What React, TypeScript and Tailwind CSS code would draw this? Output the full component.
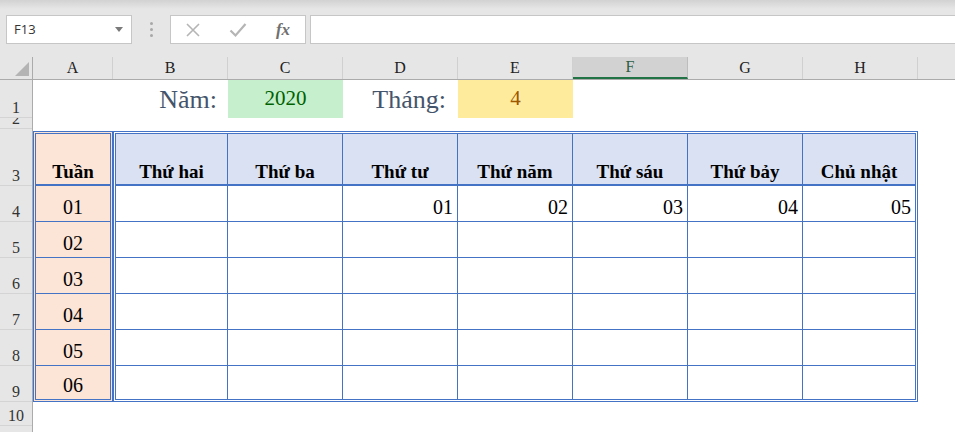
import React from 'react'

const serif = "font-['Liberation_Serif','Times_New_Roman',serif]"

const columns = [
    { label: 'A', width: 'w-[80px]' },
    { label: 'B', width: 'w-[115px]' },
    { label: 'C', width: 'w-[115px]' },
    { label: 'D', width: 'w-[115px]' },
    { label: 'E', width: 'w-[115px]' },
    { label: 'F', width: 'w-[115px]', selected: true },
    { label: 'G', width: 'w-[115px]' },
    { label: 'H', width: 'w-[115px]' },
]

const rowHeaders = [
    { label: '1', h: 'h-[38px]' },
    { label: '2', h: 'h-[11px]' },
    { label: '3', h: 'h-[57px]' },
    { label: '4', h: 'h-[36px]' },
    { label: '5', h: 'h-[36px]' },
    { label: '6', h: 'h-[36px]' },
    { label: '7', h: 'h-[36px]' },
    { label: '8', h: 'h-[36px]' },
    { label: '9', h: 'h-[36px]' },
    { label: '10', h: 'h-[24px]' },
    { label: '11', h: 'h-[24px]' },
]

const days = ['Thứ hai', 'Thứ ba', 'Thứ tư', 'Thứ năm', 'Thứ sáu', 'Thứ bảy', 'Chủ nhật']
const weeks = ['01', '02', '03', '04', '05', '06']
const firstWeek = ['', '', '01', '02', '03', '04', '05']

function FormulaBar() {
    return (
        <div className="relative h-[57px] bg-[#e6e6e6]">
            <div className="h-[9px] bg-gradient-to-b from-[#d2d2d2] to-[#e6e6e6]" />
            <div className="mt-[6px] flex h-[29px] items-stretch">
                <div className="ml-[6px] flex w-[126px] items-center justify-between border border-[#c6c6c6] bg-white pl-[7px] pr-[8px]">
                    <span className="font-['Open_Sans','Liberation_Sans',sans-serif] text-[13px] text-[#333]">F13</span>
                    <svg width="8" height="5" viewBox="0 0 8 5">
                        <path d="M0 0h8L4 5z" fill="#7a7a7a" />
                    </svg>
                </div>
                <div className="flex w-[38px] flex-col items-center justify-center gap-[3px]">
                    <span className="h-[3px] w-[3px] rounded-full bg-[#a8a8a8]" />
                    <span className="h-[3px] w-[3px] rounded-full bg-[#a8a8a8]" />
                    <span className="h-[3px] w-[3px] rounded-full bg-[#a8a8a8]" />
                </div>
                <div className="flex w-[136px] items-center border border-[#c6c6c6] bg-white">
                    <div className="flex w-[44px] justify-center">
                        <svg width="16" height="16" viewBox="0 0 16 16">
                            <path d="M2 2l12 12M14 2L2 14" stroke="#b5b5b5" strokeWidth="1.6" fill="none" />
                        </svg>
                    </div>
                    <div className="flex w-[46px] justify-center">
                        <svg width="18" height="16" viewBox="0 0 18 16">
                            <path d="M1.5 8.5l5 5L16.5 2" stroke="#b5b5b5" strokeWidth="2.2" fill="none" />
                        </svg>
                    </div>
                    <div className="flex w-[44px] justify-center">
                        <span className={`${serif} text-[17px] italic font-bold text-[#707070]`}>fx</span>
                    </div>
                </div>
                <div className="ml-[4px] flex-1 border-y border-l border-[#c6c6c6] bg-white" />
            </div>
        </div>
    )
}

function ColumnHeaders() {
    return (
        <div className="flex h-[23px] border-b border-[#ababab] bg-[#e6e6e6]">
            <div className="relative w-[33px] border-r border-[#ababab]">
                <svg className="absolute bottom-[3px] right-[3px]" width="14" height="14" viewBox="0 0 14 14">
                    <path d="M14 0V14H0z" fill="#b4b4b4" />
                </svg>
            </div>
            {columns.map((c) => (
                <div
                    key={c.label}
                    className={`${c.width} ${serif} flex items-center justify-center border-r text-[16px] ${
                        c.selected ? 'border-[#bdbdbd] border-b-2 border-b-[#217346] bg-[#d2d2d2] text-[#2e5e44]' : 'border-[#d0d0d0] text-[#222]'
                    }`}
                >
                    {c.label}
                </div>
            ))}
            <div className="flex-1" />
        </div>
    )
}

function RowHeaders() {
    return (
        <div className="w-[33px] shrink-0 border-r border-[#ababab] bg-[#e6e6e6]">
            {rowHeaders.map((r) => (
                <div key={r.label} className={`${r.h} ${serif} flex items-end justify-center overflow-hidden border-b border-[#d4d4d4] pb-[1px] text-[16px] leading-none text-[#333]`}>
                    {r.label}
                </div>
            ))}
        </div>
    )
}

function Calendar() {
    return (
        <div className={`flex h-[271px] ${serif} text-black`}>
            <div className="flex w-[80px] flex-col border-[3px] border-double border-[#4472c4] bg-[#fce4d6]">
                <div className="flex h-[52px] shrink-0 items-end justify-center border-b-2 border-[#4472c4] pb-[3px] text-[19px] font-bold leading-none">Tuần</div>
                {weeks.map((w, i) => (
                    <div
                        key={w}
                        className={`flex items-end justify-center pb-[4px] text-[20px] leading-none ${i < weeks.length - 1 ? 'h-[36px] shrink-0 border-b border-[#4472c4]' : 'flex-1'}`}
                    >
                        {w}
                    </div>
                ))}
            </div>
            <div className="grid w-[805px] grid-cols-[112px_repeat(5,115px)_112px] grid-rows-[52px_repeat(5,36px)_1fr] border-[3px] border-double border-[#4472c4]">
                {days.map((d, i) => (
                    <div key={d} className={`flex items-end justify-center border-b-2 border-[#4472c4] bg-[#d9e1f2] pb-[3px] text-[19px] font-bold leading-none ${i < 6 ? 'border-r' : ''}`}>
                        {d}
                    </div>
                ))}
                {weeks.map((w, r) =>
                    days.map((d, c) => (
                        <div
                            key={`${w}-${d}`}
                            className={`flex items-end justify-end border-[#4472c4] pb-[4px] pr-[4px] text-[20px] leading-none ${c < 6 ? 'border-r' : ''} ${r < 5 ? 'border-b' : ''}`}
                        >
                            {r === 0 ? firstWeek[c] : ''}
                        </div>
                    ))
                )}
            </div>
        </div>
    )
}

export default function App() {
    return (
        <div className="h-[432px] w-[955px] overflow-hidden bg-white">
            <FormulaBar />
            <ColumnHeaders />
            <div className="flex">
                <RowHeaders />
                <div className="flex flex-1 flex-col">
                    <div className={`flex h-[38px] ${serif}`}>
                        <div className="w-[80px]" />
                        <div className="flex w-[115px] items-center justify-end pr-[11px] text-[26px] text-[#44546a]">Năm:</div>
                        <div className="flex w-[115px] items-center justify-center bg-[#c6efce] text-[21px] text-[#006100]">2020</div>
                        <div className="flex w-[115px] items-center justify-end pr-[12px] text-[26px] text-[#44546a]">Tháng:</div>
                        <div className="flex w-[115px] items-center justify-center bg-[#ffeb9c] text-[21px] text-[#9c5700]">4</div>
                    </div>
                    <div className="h-[13px]" />
                    <Calendar />
                </div>
            </div>
        </div>
    )
}
